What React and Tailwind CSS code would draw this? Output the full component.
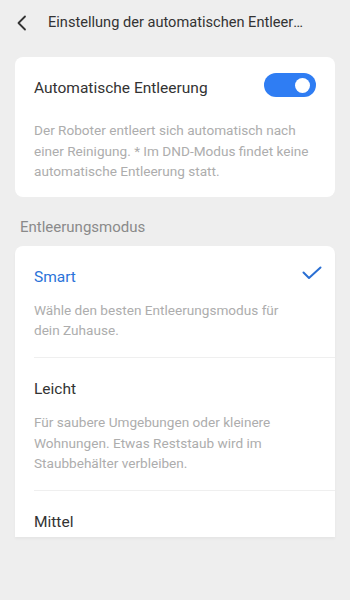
export default function App() {
  const modes = [
    { name: 'Smart', desc: 'Wähle den besten Entleerungsmodus für dein Zuhause.', active: true },
    { name: 'Leicht', desc: 'Für saubere Umgebungen oder kleinere Wohnungen. Etwas Reststaub wird im Staubbehälter verbleiben.' },
    { name: 'Mittel', desc: null },
  ]

  return (
    <div className="h-[600px] w-[350px] bg-[#eeeeee] font-['Roboto',sans-serif] overflow-hidden">
      <div className="flex h-[46px] items-center pl-[17px]">
        <svg width="10" height="16" viewBox="0 0 10 16" fill="none">
          <path d="M8 1.5L1.5 8L8 14.5" stroke="#333" strokeWidth="1.8" strokeLinecap="round" strokeLinejoin="round" />
        </svg>
        <span className="ml-[21px] w-[258px] truncate text-[14.6px] text-[#333]">Einstellung der automatischen Entleerung</span>
      </div>

      <div className="mx-[15px] mt-[11px] rounded-lg bg-white px-[19px] pt-[16px] pb-[15px]">
        <div className="flex items-start justify-between">
          <span className="pt-[3px] text-[15.5px] leading-[24px] text-[#333]">Automatische Entleerung</span>
          <div className="flex h-[24px] w-[52px] items-center justify-end rounded-full bg-[#2f7df3] pr-[6px]">
            <div className="h-[15px] w-[15px] rounded-full bg-white" />
          </div>
        </div>
        <p className="mt-[20px] text-[13.6px] leading-[20.5px] text-[#adadad]">
          Der Roboter entleert sich automatisch nach einer Reinigung. * Im DND-Modus findet keine automatische Entleerung statt.
        </p>
      </div>

      <div className="px-[20px] pt-[20px] pb-[9px] text-[15px] leading-[20px] text-[#8a8a8a]">Entleerungsmodus</div>

      <div className="mx-[15px] h-[291px] overflow-hidden rounded-t-lg bg-white shadow-[0_2px_3px_rgba(0,0,0,0.04)]">
        {modes.map((m, i) => (
          <div key={m.name} className="pl-[19px]">
            <div className={i > 0 ? 'border-t border-[#efefef]' : ''}>
              <div className="pr-[13px] pt-[19px] pb-[16.5px]">
                <div className="flex items-center justify-between">
                  <span className={`text-[15.5px] leading-[24px] ${m.active ? 'text-[#2a73d9]' : 'text-[#333]'}`}>{m.name}</span>
                  {m.active && (
                    <svg width="20" height="14" viewBox="0 0 20 14" fill="none" className="-translate-y-[4px]">
                      <path d="M1.5 6.5L7 12L18.5 1.5" stroke="#2a6fd3" strokeWidth="2" strokeLinecap="round" strokeLinejoin="round" />
                    </svg>
                  )}
                </div>
                {m.desc && (
                  <p className="mt-[11px] w-[262px] text-[13.6px] leading-[20.5px] text-[#adadad]">{m.desc}</p>
                )}
              </div>
            </div>
          </div>
        ))}
      </div>
    </div>
  )
}
